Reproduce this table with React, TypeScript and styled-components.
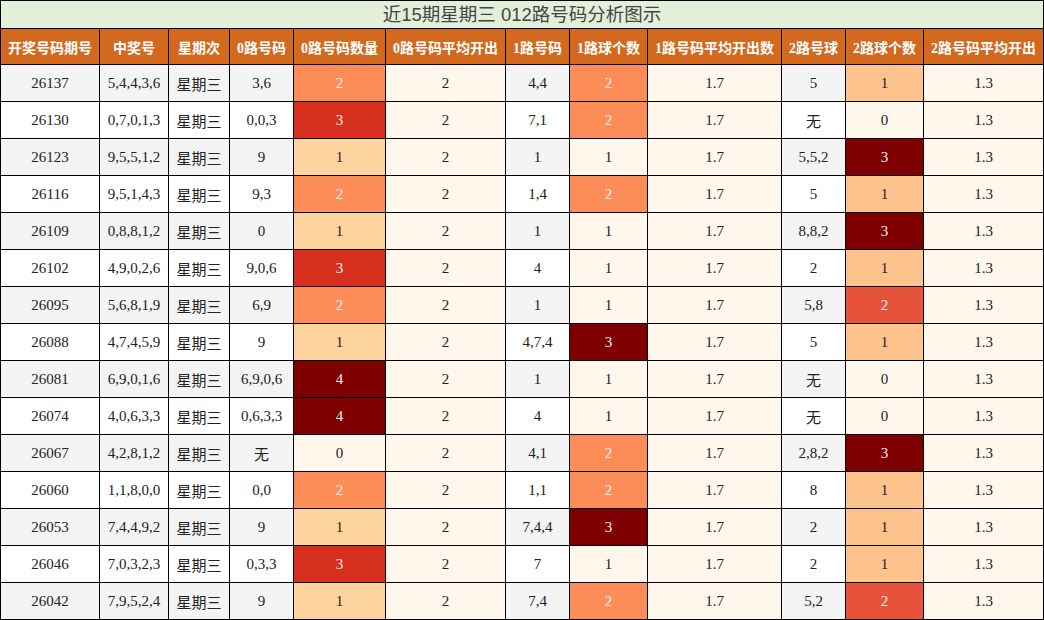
import React from "react";
import styled, { createGlobalStyle } from "styled-components";

const GlobalStyle = createGlobalStyle`
  html, body { margin: 0; padding: 0; background: #ffffff; }
  body { font-family: "Liberation Serif", "Noto Sans CJK SC", serif; }
`;

const Table = styled.table`
  border-collapse: collapse;
  table-layout: fixed;
  width: 1044px;
  font-family: "Liberation Serif", "Noto Sans CJK SC", serif;
`;

const TitleCell = styled.th`
  height: 27px;
  padding: 0;
  border: 1px solid #000;
  background: #e2efd9;
  color: #444444;
  font-family: "Liberation Sans", "Noto Sans CJK SC", sans-serif;
  font-weight: normal;
  font-size: 18.5px;
  line-height: 27px;
  text-align: center;
`;

const HeadCell = styled.th`
  height: 35px;
  padding: 0;
  border: 1px solid #000;
  background: #d2691e;
  color: #ffffff;
  font-size: 14px;
  font-weight: bold;
  text-align: center;
  white-space: nowrap;
`;

const Cell = styled.td<{ $bg: string; $light?: boolean }>`
  height: 36px;
  padding: 0;
  border: 1px solid #000;
  background: ${(p) => p.$bg};
  color: ${(p) => (p.$light ? "#f1f1f1" : "#222222")};
  font-size: 15px;
  text-align: center;
  white-space: nowrap;
`;

const widths = [99, 69, 61, 64, 92, 120, 64, 78, 134, 64, 78, 120];

const headers = [
  "开奖号码期号",
  "中奖号",
  "星期次",
  "0路号码",
  "0路号码数量",
  "0路号码平均开出",
  "1路号码",
  "1路球个数",
  "1路号码平均开出数",
  "2路号球",
  "2路球个数",
  "2路号码平均开出",
];

type Row = [string, string, string, number, string, number, string, number];

const rows: Row[] = [
  ["26137", "5,4,4,3,6", "3,6", 2, "4,4", 2, "5", 1],
  ["26130", "0,7,0,1,3", "0,0,3", 3, "7,1", 2, "无", 0],
  ["26123", "9,5,5,1,2", "9", 1, "1", 1, "5,5,2", 3],
  ["26116", "9,5,1,4,3", "9,3", 2, "1,4", 2, "5", 1],
  ["26109", "0,8,8,1,2", "0", 1, "1", 1, "8,8,2", 3],
  ["26102", "4,9,0,2,6", "9,0,6", 3, "4", 1, "2", 1],
  ["26095", "5,6,8,1,9", "6,9", 2, "1", 1, "5,8", 2],
  ["26088", "4,7,4,5,9", "9", 1, "4,7,4", 3, "5", 1],
  ["26081", "6,9,0,1,6", "6,9,0,6", 4, "1", 1, "无", 0],
  ["26074", "4,0,6,3,3", "0,6,3,3", 4, "4", 1, "无", 0],
  ["26067", "4,2,8,1,2", "无", 0, "4,1", 2, "2,8,2", 3],
  ["26060", "1,1,8,0,0", "0,0", 2, "1,1", 2, "8", 1],
  ["26053", "7,4,4,9,2", "9", 1, "7,4,4", 3, "2", 1],
  ["26046", "7,0,3,2,3", "0,3,3", 3, "7", 1, "2", 1],
  ["26042", "7,9,5,2,4", "9", 1, "7,4", 2, "5,2", 2],
];

const CREAM = "#fff7ec";

const zeroScale: Record<number, [string, boolean]> = {
  0: [CREAM, false],
  1: ["#fdd49e", false],
  2: ["#fc8d59", true],
  3: ["#d7301f", true],
  4: ["#7f0000", true],
};
const oneScale: Record<number, [string, boolean]> = {
  1: [CREAM, false],
  2: ["#fc8d59", true],
  3: ["#7f0000", true],
};
const twoScale: Record<number, [string, boolean]> = {
  0: [CREAM, false],
  1: ["#fdc38d", false],
  2: ["#e7533a", true],
  3: ["#7f0000", true],
};

export default function App() {
  return (
    <>
      <GlobalStyle />
      <Table>
        <colgroup>
          {widths.map((w, i) => (
            <col key={i} style={{ width: w }} />
          ))}
        </colgroup>
        <thead>
          <tr>
            <TitleCell colSpan={12}>近15期星期三 012路号码分析图示</TitleCell>
          </tr>
          <tr>
            {headers.map((h) => (
              <HeadCell key={h}>{h}</HeadCell>
            ))}
          </tr>
        </thead>
        <tbody>
          {rows.map((r, i) => {
            const stripe = i % 2 === 0 ? "#f4f4f4" : "#ffffff";
            const [zbg, zl] = zeroScale[r[3]];
            const [obg, ol] = oneScale[r[5]];
            const [tbg, tl] = twoScale[r[7]];
            return (
              <tr key={r[0]}>
                <Cell $bg={stripe}>{r[0]}</Cell>
                <Cell $bg={stripe}>{r[1]}</Cell>
                <Cell $bg={stripe}>星期三</Cell>
                <Cell $bg={stripe}>{r[2]}</Cell>
                <Cell $bg={zbg} $light={zl}>{r[3]}</Cell>
                <Cell $bg={CREAM}>2</Cell>
                <Cell $bg={stripe}>{r[4]}</Cell>
                <Cell $bg={obg} $light={ol}>{r[5]}</Cell>
                <Cell $bg={CREAM}>1.7</Cell>
                <Cell $bg={stripe}>{r[6]}</Cell>
                <Cell $bg={tbg} $light={tl}>{r[7]}</Cell>
                <Cell $bg={CREAM}>1.3</Cell>
              </tr>
            );
          })}
        </tbody>
      </Table>
    </>
  );
}
